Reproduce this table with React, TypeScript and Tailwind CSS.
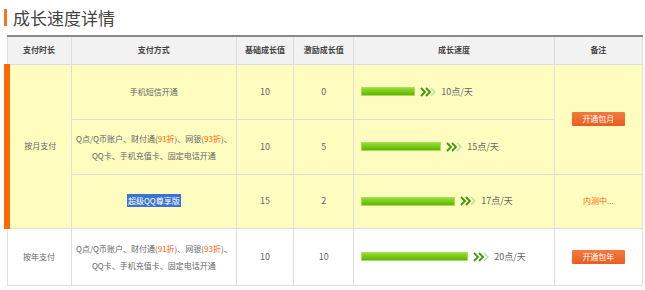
import React from "react";

const Arrow = () => (
  <svg width="16" height="10" viewBox="0 0 16 10" className="shrink-0">
    <polyline points="1,1 5,5 1,9" fill="none" stroke="#3c9a0a" strokeWidth="1.8" />
    <polyline points="6,1 10,5 6,9" fill="none" stroke="#3c9a0a" strokeWidth="1.8" />
    <polyline points="11,1 15,5 11,9" fill="none" stroke="#b8e0a0" strokeWidth="1.4" />
  </svg>
);

const Bar = ({ w, label }: { w: number; label: string }) => (
  <div className="flex items-center pl-[7px]">
    <div
      className="h-[9px] border border-[#a6e05a] bg-gradient-to-b from-[#94dd2c] to-[#5fb503]"
      style={{ width: w }}
    />
    <div className="ml-[5px]">
      <Arrow />
    </div>
    <span className="ml-[5px] text-[9px] text-[#666]">{label}</span>
  </div>
);

const Btn = ({ children }: { children: React.ReactNode }) => (
  <span className="inline-flex items-center justify-center w-[53px] h-[14px] rounded-[1px] bg-gradient-to-b from-[#f47a40] to-[#e95d1e] text-white text-[8px] leading-none">
    {children}
  </span>
);

const Orange = ({ children }: { children: React.ReactNode }) => (
  <span className="text-[#ff6600]">{children}</span>
);

export default function App() {
  const td = "border border-[#dedede] text-center align-middle p-0";
  const th = "border border-[#dedede] bg-[#f2f2f2] text-center font-bold text-[#444] text-[8px] p-0 border-t-2 border-t-[#8a8a8a]";
  return (
    <div
      className="w-[645px] h-[290px] bg-white overflow-hidden"
      style={{ fontFamily: '"Noto Sans CJK SC", "Liberation Sans", sans-serif' }}
    >
      <div className="flex items-center pl-[4px] pt-[8px] h-[26px]">
        <div className="w-[3px] h-[17px] bg-[#f07820]" />
        <span className="ml-[6px] text-[17px] leading-none text-[#444]">成长速度详情</span>
      </div>
      <table className="ml-[4px] mt-[9px] w-[639px] table-fixed border-collapse text-[8px] text-[#666]">
        <colgroup>
          <col className="w-[64px]" />
          <col className="w-[165px]" />
          <col className="w-[57px]" />
          <col className="w-[60px]" />
          <col className="w-[200px]" />
          <col className="w-[88px]" />
        </colgroup>
        <thead>
          <tr className="h-[28px]">
            <th className={th}>支付时长</th>
            <th className={th}>支付方式</th>
            <th className={th}>基础成长值</th>
            <th className={th}>激励成长值</th>
            <th className={th}>成长速度</th>
            <th className={th}>备注</th>
          </tr>
        </thead>
        <tbody>
          <tr className="h-[55px] bg-[#fffcc0]">
            <td rowSpan={3} className={td + " border-l-[6px] border-l-[#ff6a00]"}>按月支付</td>
            <td className={td}>手机短信开通</td>
            <td className={td + " text-[9px]"}>10</td>
            <td className={td + " text-[9px]"}>0</td>
            <td className={td + " text-left"}><Bar w={54} label="10点/天" /></td>
            <td rowSpan={2} className={td}><Btn>开通包月</Btn></td>
          </tr>
          <tr className="h-[55px] bg-[#fffcc0]">
            <td className={td + " leading-[17px]"}>
              Q点/Q币账户、财付通(<Orange>91折</Orange>)、网银(<Orange>93折</Orange>)、
              <br />
              QQ卡、手机充值卡、固定电话开通
            </td>
            <td className={td + " text-[9px]"}>10</td>
            <td className={td + " text-[9px]"}>5</td>
            <td className={td + " text-left"}><Bar w={80} label="15点/天" /></td>
          </tr>
          <tr className="h-[54px] bg-[#fffcc0]">
            <td className={td}>
              <span className="bg-[#3a73d4] text-white px-[1px] py-[1px]">超级QQ尊享版</span>
            </td>
            <td className={td + " text-[9px]"}>15</td>
            <td className={td + " text-[9px]"}>2</td>
            <td className={td + " text-left"}><Bar w={94} label="17点/天" /></td>
            <td className={td + " text-[#ff6600]"}>内测中...</td>
          </tr>
          <tr className="h-[57px] bg-white">
            <td className={td}>按年支付</td>
            <td className={td + " leading-[17px]"}>
              Q点/Q币账户、财付通(<Orange>91折</Orange>)、网银(<Orange>93折</Orange>)、
              <br />
              QQ卡、手机充值卡、固定电话开通
            </td>
            <td className={td + " text-[9px]"}>10</td>
            <td className={td + " text-[9px]"}>10</td>
            <td className={td + " text-left"}><Bar w={107} label="20点/天" /></td>
            <td className={td}><Btn>开通包年</Btn></td>
          </tr>
        </tbody>
      </table>
    </div>
  );
}
